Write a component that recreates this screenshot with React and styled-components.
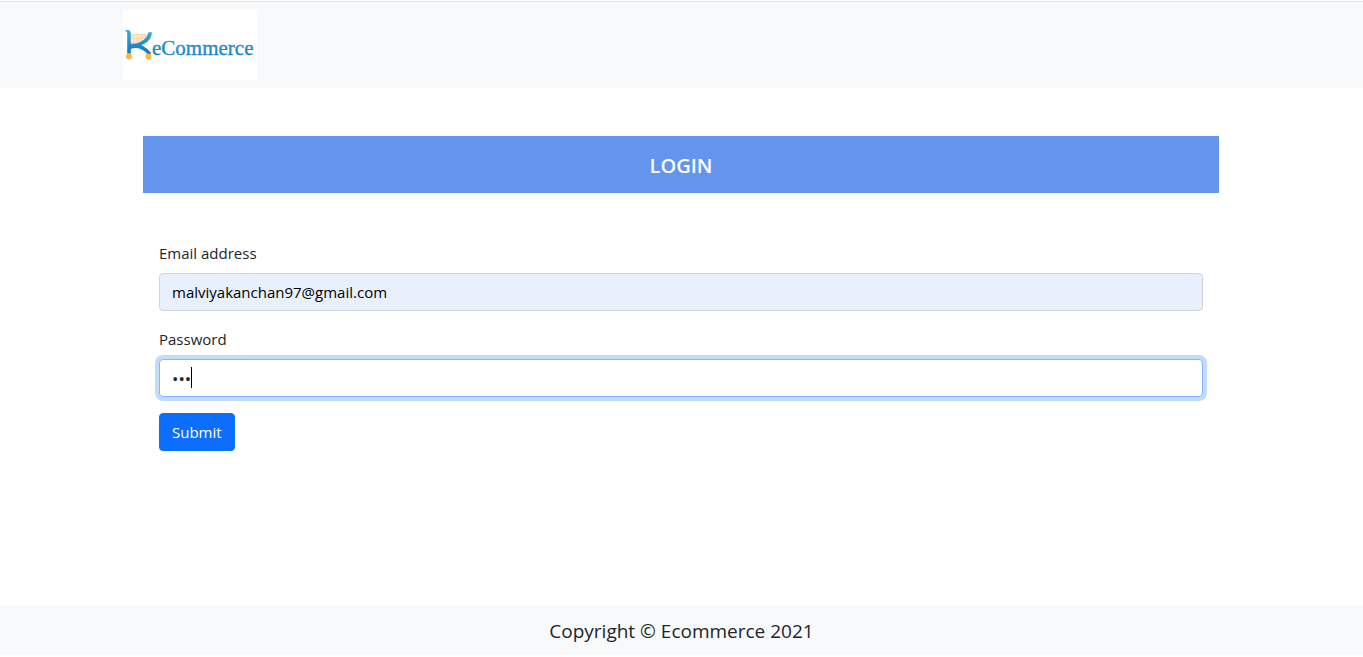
import React from "react";
import styled, { createGlobalStyle } from "styled-components";

const GlobalStyle = createGlobalStyle`
  *, *::before, *::after { box-sizing: border-box; }
  body {
    margin: 0;
    background: #fff;
    color: #212529;
    font-family: "Open Sans", "Noto Sans", sans-serif;
    font-size: 15px;
    line-height: 24px;
  }
`;

const Page = styled.div`
  display: flex;
  flex-direction: column;
  min-height: 100vh;
  padding: 1px 0 2px;
`;

const Container = styled.div`
  width: 100%;
  max-width: 1141px;
  margin: 0 auto;
  padding: 0 13px 0 12px;
`;

const Header = styled.header`
  border-top: 1px solid #dcdfe3;
  background: #f8f9fa;
  padding: 8px 0;
`;

const Brand = styled.a`
  display: block;
  width: 134px;
  height: 70px;
  background: #fff;

  svg { display: block; }
`;

const Main = styled.main`
  flex: 1;
  padding: 48px 0;
`;

const Panel = styled.section`
  margin: 0 20px;
`;

const Title = styled.h1`
  margin: 0;
  padding: 17px 16px 15px;
  background: #6495ed;
  color: #fff;
  font-size: 20px;
  font-weight: 600;
  line-height: 25px;
  text-align: center;
`;

const Form = styled.form`
  padding: 48px 16px 0;
`;

const Field = styled.div`
  margin-bottom: 16px;
`;

const Label = styled.label`
  display: block;
  margin-bottom: 8px;
`;

const Input = styled.input`
  display: block;
  width: 100%;
  height: 38px;
  padding: 6px 12px;
  border: 1px solid #ced4da;
  border-radius: 4px;
  background: ${(p) => (p.$filled ? "#e8f0fe" : "#fff")};
  color: ${(p) => (p.$filled ? "#000" : "#212529")};
  font: inherit;
  outline: 0;

  &:focus {
    border-color: #86b7fe;
    box-shadow: 0 0 0 4px rgba(13, 110, 253, 0.25);
  }
`;

const PasswordInput = styled(Input)`
  font-size: 17px;
  caret-color: transparent;
`;

const PasswordBox = styled.div`
  position: relative;

  &:focus-within::after {
    content: "";
    position: absolute;
    top: 8px;
    left: 32px;
    width: 1px;
    height: 21px;
    background: #000;
    pointer-events: none;
  }
`;

const SubmitButton = styled.button`
  display: block;
  height: 38px;
  padding: 6px 12px;
  border: 1px solid #0d6efd;
  border-radius: 4px;
  background: #0d6efd;
  color: #fff;
  font: inherit;
  cursor: pointer;
`;

const Footer = styled.footer`
  padding: 11px 10px 9px;
  background: #f8f9fa;
  font-size: 19px;
  line-height: 30px;
  text-align: center;
`;

function Logo() {
  return (
    <svg width="134" height="70" viewBox="0 0 134 70" role="img" aria-label="KeCommerce">
      <defs>
        <linearGradient id="ink" x1="0" y1="0" x2="0" y2="1">
          <stop offset="0" stopColor="#3bb0e2" />
          <stop offset="1" stopColor="#1271b5" />
        </linearGradient>
      </defs>
      <path
        d="M8 24H26V27L22 32L17 34H8Z"
        fill="#fdebd0"
      />
      <path
        d="M7 24.500H26M7 28.500H24M7 32.500H20M10.500 24V34M14.500 24V34M18.500 24V33M22.500 24V30"
        stroke="#fcd9a6"
        strokeWidth="1"
        fill="none"
      />
      <path
        d="M2.500 20H5.500Q7.800 20.500 7.800 23V33.500Q13 34.500 18 31.500Q24.500 28 25.300 22.500L28.800 22Q29 28 24 32Q21.500 34 18.500 35Q24 38 28.500 43.500L25 44.500Q20 38.500 13 38Q9 38 7.800 39V43.500H4.200V23Q4 21.500 2.500 21.300Z"
        fill="url(#ink)"
      />
      <circle cx="6" cy="46.500" r="3" fill="#fdb53c" />
      <circle cx="25.500" cy="46.500" r="3" fill="#fdb53c" />
      <text
        x="29"
        y="45"
        fill="url(#ink)"
        stroke="#2389c6"
        strokeWidth="0.400"
        fontFamily="'Liberation Serif', serif"
        fontSize="21"
      >
        eCommerce
      </text>
    </svg>
  );
}

export default function App() {
  return (
    <>
      <GlobalStyle />
      <Page>
        <Header>
          <Container>
            <Brand href="#">
              <Logo />
            </Brand>
          </Container>
        </Header>
        <Main>
          <Container>
            <Panel>
              <Title>LOGIN</Title>
              <Form onSubmit={(e) => e.preventDefault()}>
                <Field>
                  <Label htmlFor="email">Email address</Label>
                  <Input id="email" type="email" $filled defaultValue="malviyakanchan97@gmail.com" />
                </Field>
                <Field>
                  <Label htmlFor="password">Password</Label>
                  <PasswordBox>
                    <PasswordInput id="password" type="password" defaultValue="123" autoFocus />
                  </PasswordBox>
                </Field>
                <SubmitButton type="submit">Submit</SubmitButton>
              </Form>
            </Panel>
          </Container>
        </Main>
        <Footer>Copyright © Ecommerce 2021</Footer>
      </Page>
    </>
  );
}
